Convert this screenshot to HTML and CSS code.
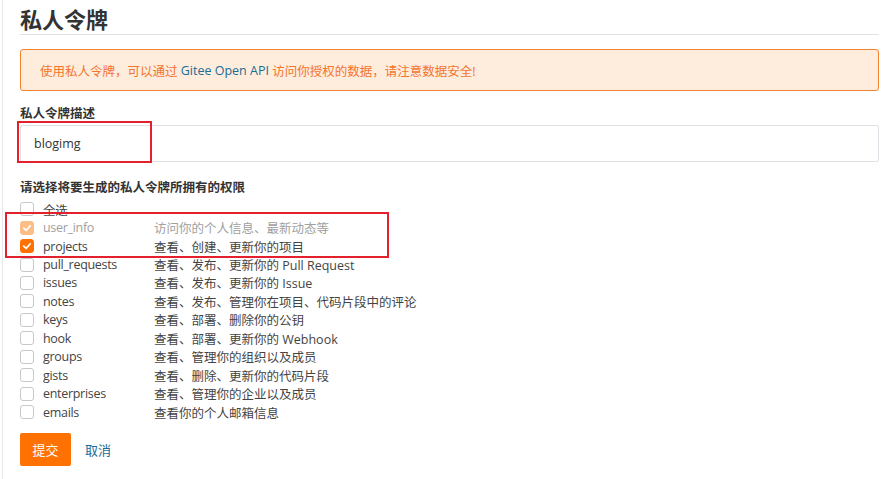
FILE: index.html
```html
<!DOCTYPE html>
<html lang="zh">
<head>
<meta charset="utf-8">
<link rel="stylesheet" href="styles.css">
</head>
<body>
<div class="page">
  <div class="content">
    <h1 class="title">私人令牌</h1>
    <div class="alert">使用私人令牌，可以通过 <span class="api">Gitee Open API</span> 访问你授权的数据，请注意数据安全!</div>
    <div class="field">
      <div class="label">私人令牌描述</div>
      <div class="input-wrap">
        <div class="input">blogimg</div>
        <div class="mark mark-input"></div>
      </div>
    </div>
    <div class="field perms">
      <div class="label">请选择将要生成的私人令牌所拥有的权限</div>
      <div class="list">
        <div class="row"><span class="cb"></span><span class="name">全选</span></div>
        <div class="row disabled"><span class="cb checked dim"><svg viewBox="0 0 14 14"><path d="M3.2 7.2 L6 9.8 L10.8 4.4" fill="none" stroke="#fff" stroke-width="2" stroke-linecap="round" stroke-linejoin="round"/></svg></span><span class="name">user_info</span><span class="desc">访问你的个人信息、最新动态等</span></div>
        <div class="row"><span class="cb checked"><svg viewBox="0 0 14 14"><path d="M3.2 7.2 L6 9.8 L10.8 4.4" fill="none" stroke="#fff" stroke-width="2" stroke-linecap="round" stroke-linejoin="round"/></svg></span><span class="name">projects</span><span class="desc">查看、创建、更新你的项目</span></div>
        <div class="row"><span class="cb"></span><span class="name">pull_requests</span><span class="desc">查看、发布、更新你的 Pull Request</span></div>
        <div class="row"><span class="cb"></span><span class="name">issues</span><span class="desc">查看、发布、更新你的 Issue</span></div>
        <div class="row"><span class="cb"></span><span class="name">notes</span><span class="desc">查看、发布、管理你在项目、代码片段中的评论</span></div>
        <div class="row"><span class="cb"></span><span class="name">keys</span><span class="desc">查看、部署、删除你的公钥</span></div>
        <div class="row"><span class="cb"></span><span class="name">hook</span><span class="desc">查看、部署、更新你的 Webhook</span></div>
        <div class="row"><span class="cb"></span><span class="name">groups</span><span class="desc">查看、管理你的组织以及成员</span></div>
        <div class="row"><span class="cb"></span><span class="name">gists</span><span class="desc">查看、删除、更新你的代码片段</span></div>
        <div class="row"><span class="cb"></span><span class="name">enterprises</span><span class="desc">查看、管理你的企业以及成员</span></div>
        <div class="row"><span class="cb"></span><span class="name">emails</span><span class="desc">查看你的个人邮箱信息</span></div>
        <div class="mark mark-list"></div>
      </div>
    </div>
    <div class="actions">
      <button class="btn">提交</button>
      <a class="cancel">取消</a>
    </div>
  </div>
</div>
</body>
</html>
```
FILE: styles.css
```css
* { box-sizing: border-box; }
html, body { margin: 0; padding: 0; background: #fff; }
body {
  font-family: "Open Sans", "Noto Sans CJK SC", sans-serif;
  font-size: 13px;
  color: #333;
  width: 884px;
  height: 479px;
  overflow: hidden;
}
.page {
  margin-left: 2px;
  border-left: 1px solid #e6e6e6;
  height: 479px;
}
.content {
  padding-left: 17px;
  width: 876px;
}
.title {
  margin: 0;
  font-size: 22px;
  font-weight: 700;
  color: #333;
  line-height: 28px;
  padding-top: 4px;
  padding-bottom: 2px;
  border-bottom: 1px solid #e2e2e2;
  font-family: "Noto Sans CJK SC", sans-serif;
}
.alert {
  margin-top: 14px;
  height: 42px;
  border: 1px solid #f5822f;
  border-radius: 3px;
  background: #feeddd;
  color: #f5732d;
  padding-left: 19px;
  display: flex;
  align-items: center;
  white-space: pre;
  font-size: 12.5px;
}
.api { color: #1a6b95; }
.field { margin-top: 13px; }
.label {
  font-weight: 700;
  font-size: 12.5px;
  line-height: 17px;
  color: #333;
  font-family: "Noto Sans CJK SC", sans-serif;
}
.input-wrap { position: relative; margin-top: 4px; }
.input {
  height: 37px;
  border: 1px solid #e0e0e6;
  border-radius: 2px;
  padding-left: 13px;
  display: flex;
  align-items: center;
  font-size: 12.5px;
  color: #333;
}
.mark {
  position: absolute;
  border: 2px solid #e4202c;
  pointer-events: none;
}
.mark-input { left: -3px; top: -4px; width: 135px; height: 42px; }
.perms { margin-top: 16px; }
.perms .label { margin-bottom: 5px; }
.list { position: relative; }
.row {
  display: flex;
  align-items: center;
  height: 18.45px;
  font-size: 12.5px;
  color: #444;
}
.cb {
  width: 14px;
  height: 14px;
  border: 1px solid #c8c8c8;
  border-radius: 3px;
  background: #fff;
  flex: none;
  margin-right: 9px;
  display: flex;
  align-items: center;
  justify-content: center;
}
.cb svg { width: 14px; height: 14px; display: block; }
.cb.checked { background: #ff7100; border-color: #ff7100; }
.cb.checked.dim { background: #fdbd86; border-color: #fdbd86; }
.name { width: 111px; flex: none; letter-spacing: -0.3px; }
.row.disabled { color: #a0a0a0; }
.desc { white-space: nowrap; }
.mark-list { left: -15px; top: 12px; width: 384px; height: 46px; }
.actions {
  margin-top: 12px;
  display: flex;
  align-items: center;
}
.btn {
  width: 51px;
  height: 33px;
  background: #ff7100;
  color: #fff;
  border: none;
  border-radius: 2px;
  font-family: "Noto Sans CJK SC", sans-serif;
  font-size: 13px;
  padding: 0;
}
.cancel {
  margin-left: 14px;
  color: #1a6b95;
  font-size: 13px;
  font-family: "Noto Sans CJK SC", sans-serif;
}
```
